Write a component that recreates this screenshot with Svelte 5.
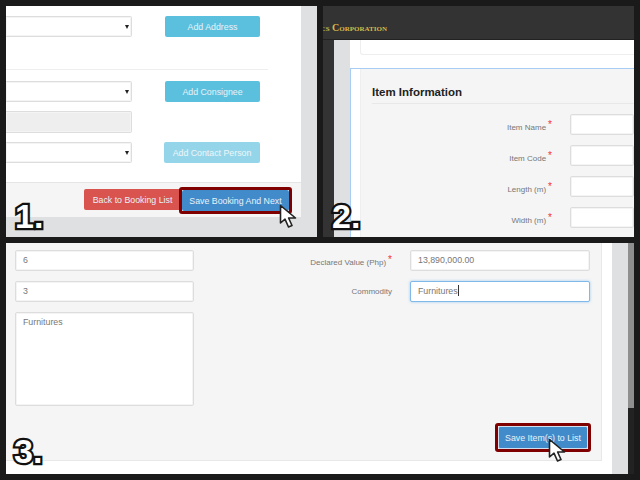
<script>
    const itemRows = [
        { label: "Item Name" },
        { label: "Item Code" },
        { label: "Length (m)" },
        { label: "Width (m)" }
    ];
</script>

{#snippet cursor()}
    <svg class="cursor" width="19" height="25" viewBox="0 0 19 25">
        <path d="M1.5 1.5 L1.5 19 L6 15.2 L9.5 23 L13 21.5 L9.6 14 L16.5 14 Z" fill="#fff" stroke="#222" stroke-width="1.6" stroke-linejoin="round" />
    </svg>
{/snippet}

<div class="sheet">
    <section class="panel one">
        <div class="card">
            <div class="row">
                <div class="field select"></div>
                <button class="btn info">Add Address</button>
            </div>
            <hr />
            <div class="row">
                <div class="field select"></div>
                <button class="btn info">Add Consignee</button>
            </div>
            <div class="field disabled"></div>
            <div class="row">
                <div class="field select"></div>
                <button class="btn info faded">Add Contact Person</button>
            </div>
            <div class="footer">
                <button class="btn danger">Back to Booking List</button>
                <div class="marked">
                    <button class="btn primary wide">Save Booking And Next</button>
                    {@render cursor()}
                </div>
            </div>
        </div>
        <span class="step">1.</span>
    </section>

    <section class="panel two">
        <div class="topbar"><span class="logo">Logistics Corporation</span></div>
        <div class="body">
            <div class="side"></div>
            <div class="gutter"></div>
            <div class="main">
                <div class="stub"></div>
                <div class="selected">
                    <div class="item">
                        <h3>Item Information</h3>
                        {#each itemRows as row}
                            <div class="item-row">
                                <span class="label">{row.label}<i>*</i></span>
                                <div class="field"></div>
                            </div>
                        {/each}
                    </div>
                </div>
            </div>
        </div>
        <span class="step">2.</span>
    </section>

    <section class="panel three">
        <div class="content">
            <div class="form">
                <div class="cols">
                    <div class="col">
                        <div class="field text">6</div>
                        <div class="field text">3</div>
                        <div class="field text area">Furnitures</div>
                    </div>
                    <div class="col right">
                        <div class="pair">
                            <span class="label">Declared Value (Php)<i>*</i></span>
                            <div class="field text">13,890,000.00</div>
                        </div>
                        <div class="pair">
                            <span class="label">Commodity</span>
                            <div class="field text focus">Furnitures<span class="caret"></span></div>
                        </div>
                    </div>
                </div>
                <div class="form-foot">
                    <div class="marked">
                        <button class="btn primary">Save Item(s) to List</button>
                        {@render cursor()}
                    </div>
                </div>
            </div>
        </div>
        <div class="white"></div>
        <div class="gray"></div>
        <div class="scroll"><div class="thumb"></div></div>
        <span class="step">3.</span>
    </section>
</div>

<style>
    :global(body) {
        background: #1a1a1a;
    }

    .sheet {
        width: 640px;
        height: 480px;
        box-sizing: border-box;
        padding: 6px;
        display: grid;
        grid-template-columns: 311px 311px;
        grid-template-rows: 231px 231px;
        gap: 6px;
        font-family: "Liberation Sans", Arial, sans-serif;
        font-size: 8.8px;
        color: #777;
    }

    .panel {
        position: relative;
        overflow: hidden;
        background: #dfe0e1;
    }

    .step {
        position: absolute;
        font-family: "Liberation Sans", sans-serif;
        font-weight: bold;
        font-size: 34px;
        line-height: 34px;
        color: #fff;
        -webkit-text-stroke: 4.5px #111;
        paint-order: stroke fill;
    }

    .one .step { left: 9px; top: 193px; }
    .two .step { left: 9px; top: 193px; }
    .three .step { left: 8px; top: 191px; }

    .cursor {
        position: absolute;
    }

    .wide + .cursor {
        left: 97px;
        top: 14px;
    }

    .form-foot .cursor {
        left: 50px;
        top: 12px;
    }

    .field {
        box-sizing: border-box;
        height: 21px;
        background: #fff;
        border: 1px solid #ddd;
        border-radius: 2px;
        box-shadow: inset 0 0 0 1px #f4f4f4;
    }

    .text {
        padding: 0 7px;
        line-height: 18px;
    }

    .btn {
        height: 21px;
        padding: 0;
        border: 1px solid transparent;
        border-radius: 2px;
        color: #e8f2f8;
        font: inherit;
    }

    .info {
        width: 95px;
        background: #5bc0de;
    }

    .faded {
        width: 96px;
        margin-left: -1px;
        opacity: 0.65;
    }

    .danger {
        width: 97px;
        background: #d9534f;
    }

    .primary {
        background: #428bca;
        width: 90px;
        height: 23px;
    }

    .wide {
        width: 107px;
        height: 21px;
    }

    .marked {
        position: relative;
        display: flex;
        margin-left: 2px;
        border: 3px solid #800000;
        border-radius: 3px;
    }

    /* panel 1 */
    .card {
        box-sizing: border-box;
        width: 295px;
        height: 211px;
        padding-top: 10px;
        background: #fff;
        border-bottom-right-radius: 3px;
        display: flex;
        flex-direction: column;
    }

    .row {
        display: flex;
        gap: 33px;
    }

    .one .field {
        width: 126px;
        border-left: 0;
        border-radius: 0 2px 2px 0;
        flex: none;
    }

    .select {
        position: relative;
    }

    .select::after {
        content: "";
        position: absolute;
        right: 2px;
        top: 8px;
        border: 2.5px solid transparent;
        border-top: 4px solid #222;
        border-bottom: 0;
    }

    hr {
        width: 262px;
        height: 1px;
        margin: 32px 0 11px 0;
        border: 0;
        background: #eee;
    }

    .one .disabled {
        height: 22px;
        margin: 9px 0;
        background: #eee;
    }

    .footer {
        margin-top: 19px;
        flex: 1;
        box-sizing: border-box;
        background: #f5f5f5;
        border-top: 1px solid #e5e5e5;
        padding: 4px 9px 0 0;
        display: flex;
        justify-content: flex-end;
        align-items: flex-start;
    }

    .footer .danger {
        margin-top: 2px;
    }

    .footer .marked {
        margin-left: -2px;
    }

    /* panel 2 */
    .two {
        display: flex;
        flex-direction: column;
    }

    .topbar {
        flex: none;
        box-sizing: border-box;
        height: 34px;
        background: #333;
        border-bottom: 1px solid #222;
        overflow: hidden;
        padding-top: 16px;
    }

    .logo {
        display: block;
        margin-left: -34px;
        font-family: "Liberation Serif", serif;
        font-weight: bold;
        font-size: 10px;
        line-height: 12px;
        font-variant: small-caps;
        color: #d8b848;
        white-space: nowrap;
    }

    .body {
        flex: 1;
        display: flex;
        min-height: 0;
    }

    .side {
        width: 11px;
        background: #333;
    }

    .gutter {
        width: 16px;
    }

    .main {
        flex: 1;
        background: #fff;
        min-width: 0;
    }

    .stub {
        box-sizing: border-box;
        height: 15px;
        margin: 0 0 13px 10px;
        border: 1px solid #eee;
        border-top: 0;
        border-right: 0;
        border-bottom-left-radius: 3px;
    }

    .selected {
        border-top: 1px solid #a8cdf5;
        border-left: 1px solid #a8cdf5;
        padding-left: 9px;
    }

    .item {
        background: #f5f5f5;
        border-left: 1px solid #eee;
        padding: 16px 0 0 11px;
        height: 200px;
    }

    h3 {
        margin: 0 0 10px 0;
        padding-bottom: 3px;
        height: 15px;
        font-size: 11.5px;
        line-height: 15px;
        color: #222;
        border-bottom: 1px solid #e8e8e8;
    }

    .item-row {
        display: flex;
        height: 31px;
    }

    .item-row .label {
        width: 180px;
        padding-top: 7px;
    }

    .item-row .field {
        margin-left: 18px;
        flex: 1;
    }

    .label {
        text-align: right;
        white-space: nowrap;
        font-size: 8px;
        box-sizing: border-box;
    }

    .label i {
        font-style: normal;
        color: #e33;
        margin-left: 2px;
        font-size: 10px;
        position: relative;
        top: -2px;
    }

    /* panel 3 */
    .three {
        grid-column: 1 / 3;
        display: flex;
    }

    .content {
        width: 596px;
        background: #fff;
        flex: none;
    }

    .form {
        box-sizing: border-box;
        height: 218px;
        background: #f5f5f5;
        border-bottom: 1px solid #e8e8e8;
        border-right: 1px solid #e8e8e8;
        padding: 7px 11px 0 9px;
        position: relative;
    }

    .cols {
        display: flex;
        justify-content: space-between;
        height: 166px;
    }

    .col {
        width: 179px;
        display: flex;
        flex-direction: column;
        gap: 10px;
    }

    .col.right {
        width: 280px;
    }

    .area {
        height: 94px;
        padding-top: 1px;
        line-height: 17px;
    }

    .pair {
        display: flex;
        align-items: flex-start;
    }

    .pair .label {
        width: 82px;
        flex: none;
        padding-top: 6px;
        margin-right: 18px;
    }

    .pair .field {
        width: 180px;
        flex: none;
    }

    .focus {
        border-color: #80b8ea;
        box-shadow: 0 0 3px rgba(102, 175, 233, 0.6);
    }

    .caret {
        display: inline-block;
        width: 1px;
        height: 11px;
        background: #333;
        vertical-align: -2px;
    }

    .form-foot {
        display: flex;
        justify-content: flex-end;
        margin-top: 7px;
    }

    .form-foot .marked {
        margin-right: -1px;
    }

    .form-foot .primary {
        border: 1px solid #cfe0f0;
    }

    .white {
        width: 10px;
        background: #fff;
    }

    .gray {
        width: 16px;
    }

    .scroll {
        width: 6px;
        background: #222;
    }

    .thumb {
        width: 6px;
        height: 165px;
        background: #8f8f8f;
    }
</style>
